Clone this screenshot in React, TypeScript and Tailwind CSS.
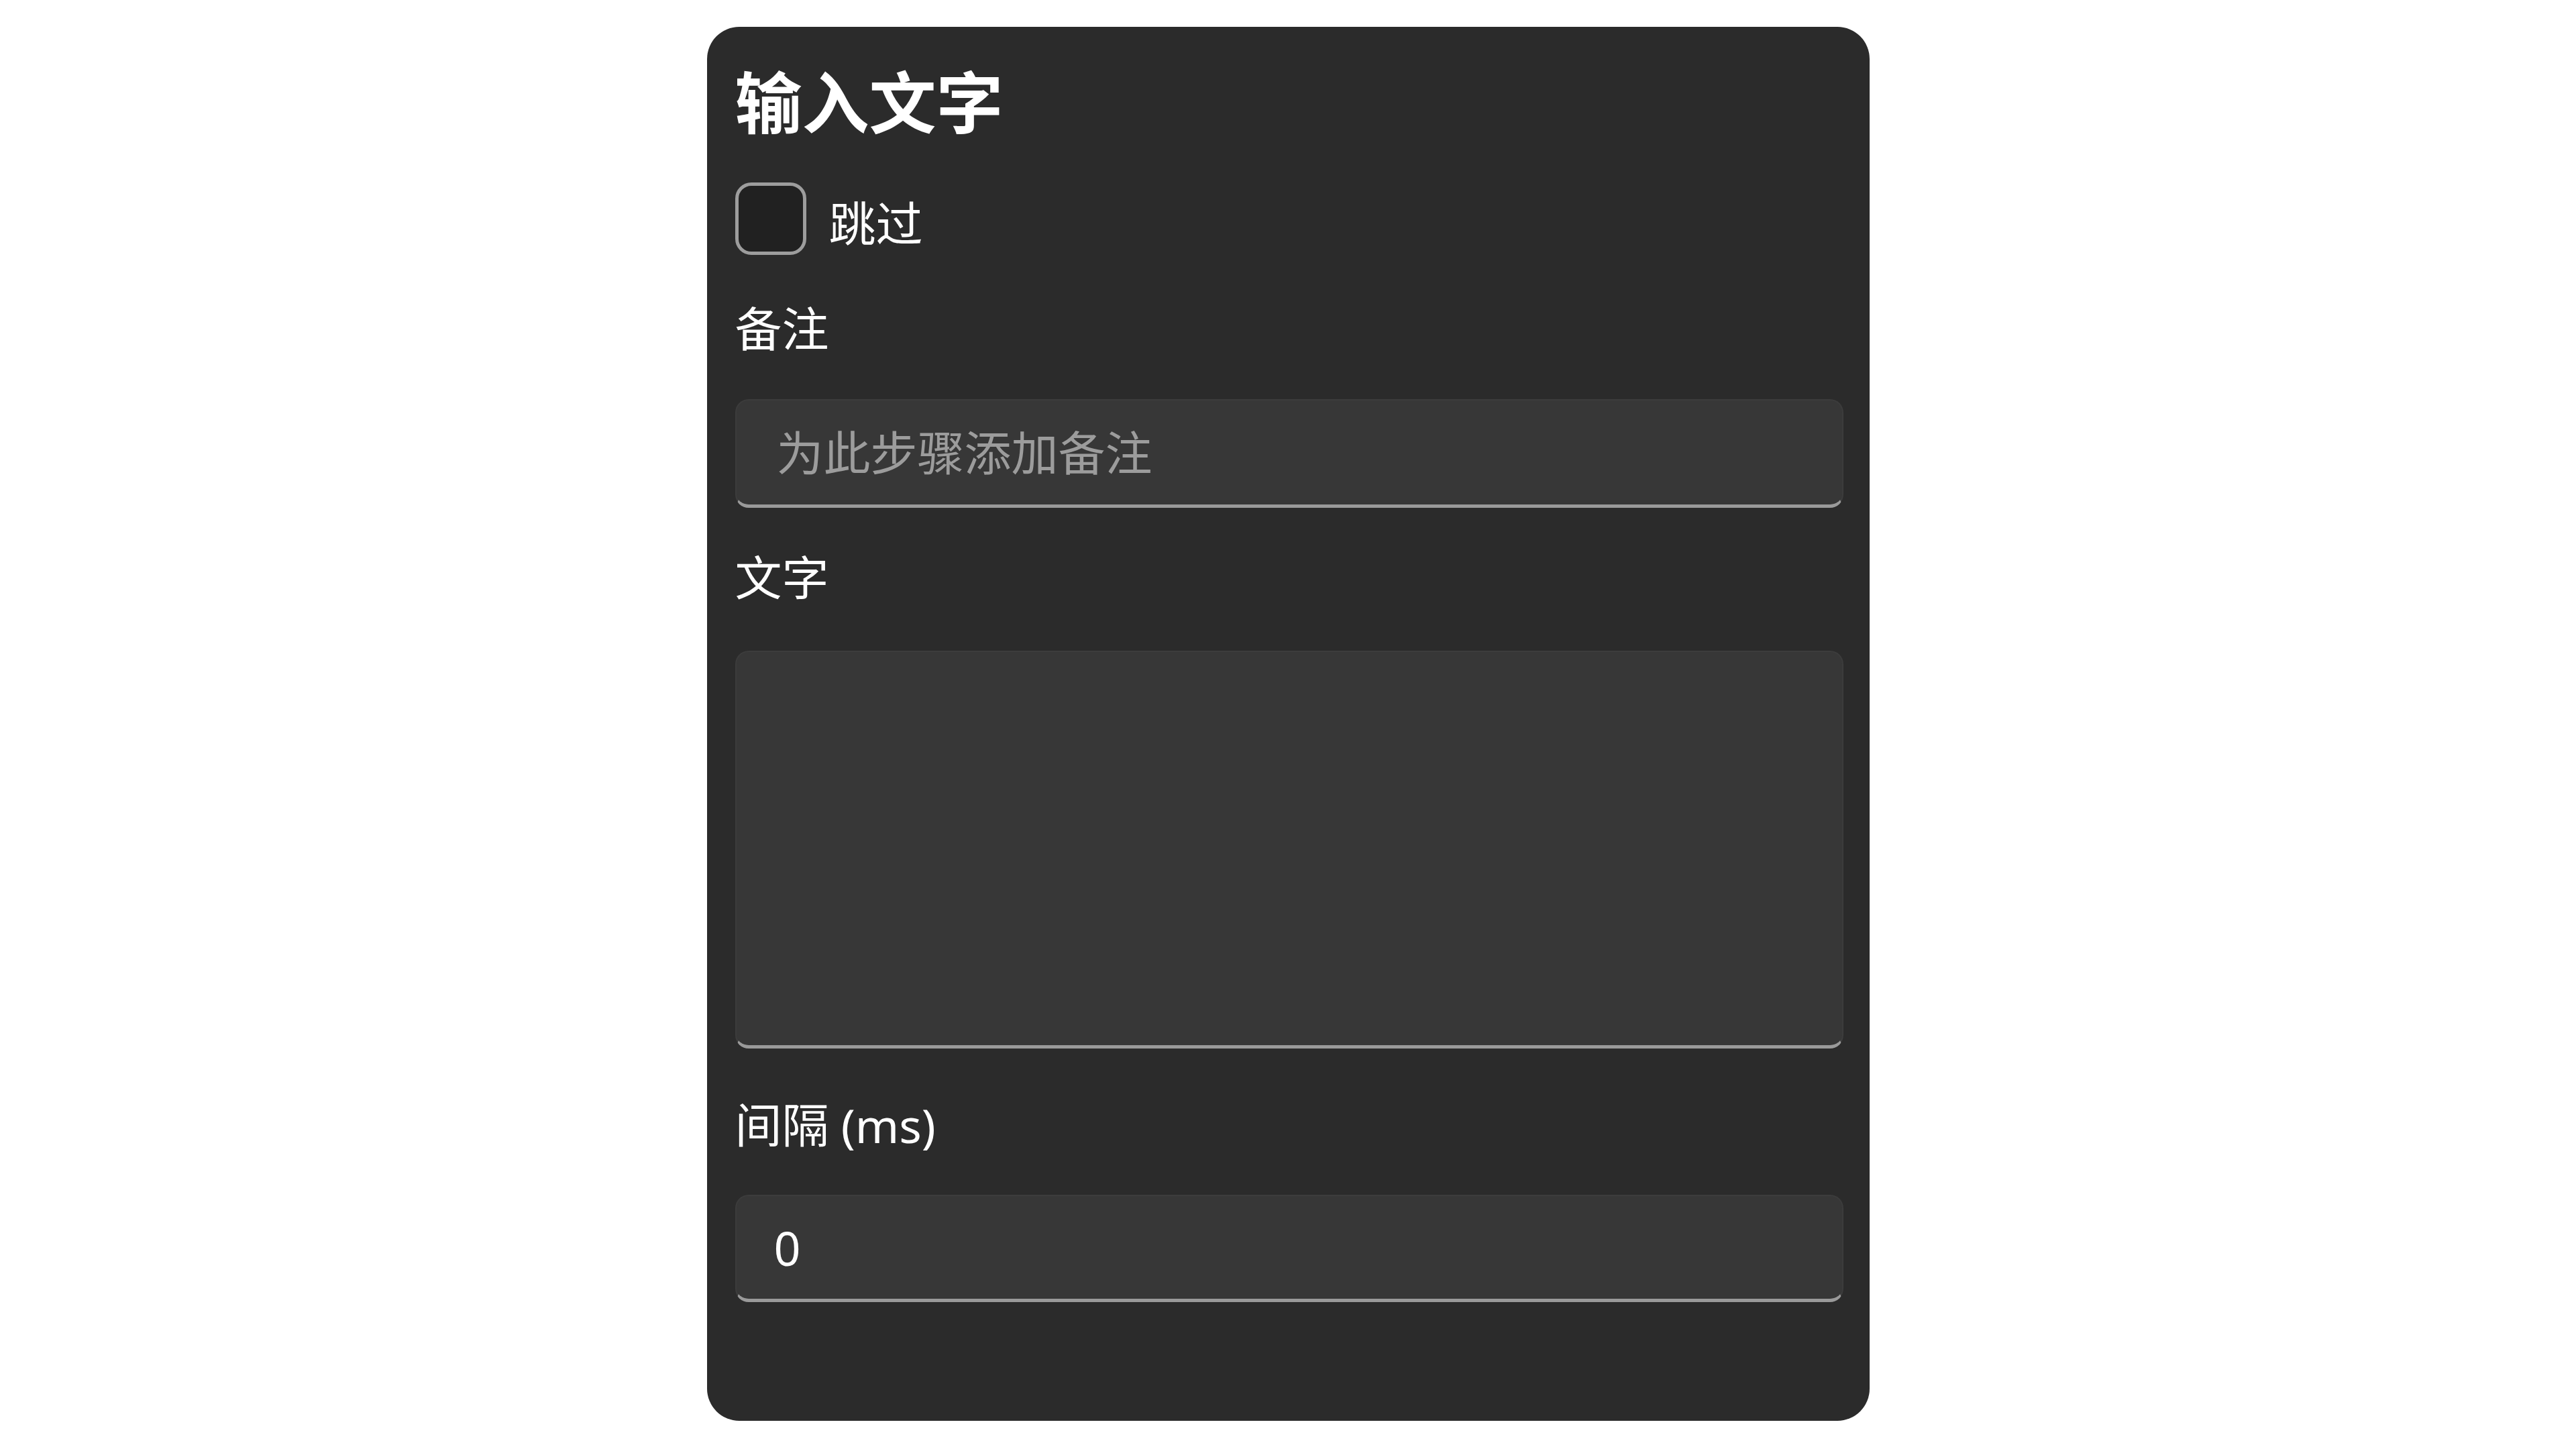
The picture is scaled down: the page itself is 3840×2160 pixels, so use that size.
import { useState } from "react";

const fieldClass =
  "block w-full rounded-[20px] border-2 border-b-[5px] border-[#3c3c3c] border-b-[#9a9a9a] bg-[#373737] px-[60px] text-[70px] text-white outline-none placeholder:text-[#9c9c9c]";

export default function App() {
  const [skip, setSkip] = useState(false);
  const [note, setNote] = useState("");
  const [text, setText] = useState("");
  const [interval, setInterval] = useState("0");

  return (
    <div className="min-h-screen bg-white pt-[40px] font-['Noto_Sans','Noto_Sans_CJK_SC',sans-serif]">
      <section className="mx-auto w-[1733px] rounded-[48px] bg-[#2b2b2b] pb-[177px] pl-[42px] pr-[39px] pt-[42px] text-white">
        <h1 className="text-[100px] font-bold leading-[140px]">输入文字</h1>

        <label className="mt-[50px] flex h-[108px] cursor-pointer items-center gap-[34px]">
          <input
            checked={skip}
            className="h-[108px] w-[106px] shrink-0 cursor-pointer appearance-none rounded-[24px] border-[5px] border-[#9d9d9d] bg-[#212121] checked:bg-[#4cc2ff]"
            onChange={(e) => setSkip(e.target.checked)}
            type="checkbox"
          />
          <span className="pt-[14px] text-[70px] leading-[100px]">跳过</span>
        </label>

        <p className="mt-[60px] text-[70px] leading-[100px]">备注</p>
        <input
          className={`${fieldClass} mt-[55px] h-[162px]`}
          onChange={(e) => setNote(e.target.value)}
          placeholder="为此步骤添加备注"
          value={note}
        />

        <p className="mt-[54px] text-[70px] leading-[100px]">文字</p>
        <textarea
          className={`${fieldClass} mt-[59px] h-[593px] resize-none py-[40px]`}
          onChange={(e) => setText(e.target.value)}
          value={text}
        />

        <p className="mt-[64px] text-[70px] leading-[100px]">间隔 (ms)</p>
        <input
          className={`${fieldClass} mt-[54px] h-[160px] !px-[56px]`}
          inputMode="numeric"
          onChange={(e) => setInterval(e.target.value)}
          value={interval}
        />
      </section>
    </div>
  );
}
